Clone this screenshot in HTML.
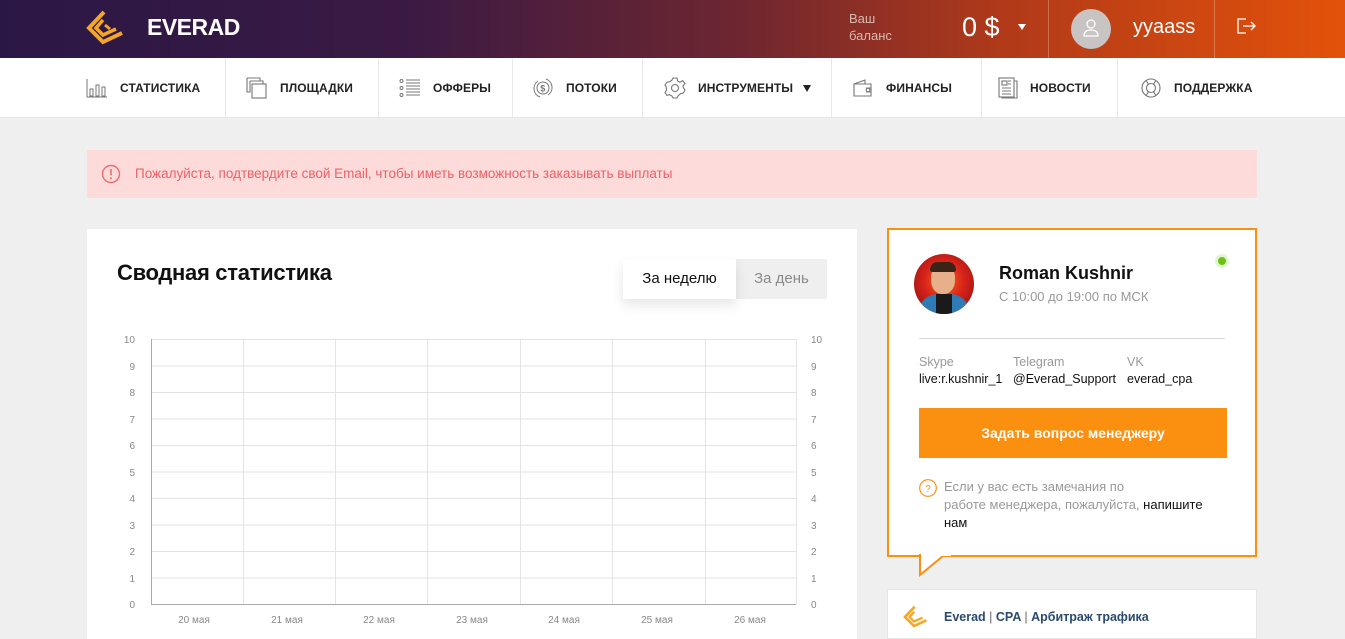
<!DOCTYPE html>
<html><head><meta charset="utf-8"><style>
*{box-sizing:border-box;margin:0;padding:0}
body{width:1345px;height:634px;overflow:hidden;background:#efefef;font-family:"Liberation Sans",sans-serif;position:relative}
.hdr{position:absolute;left:0;top:0;width:1345px;height:58px;background:linear-gradient(90deg,#2b1745 0%,#3a1a44 30%,#6e2630 55%,#b23a19 75%,#e3520a 100%)}
.nav{position:absolute;left:0;top:58px;width:1345px;height:60px;background:#fff;border-bottom:1px solid #e6e6e6}
.ni{position:absolute;top:0;height:60px;display:flex;align-items:center;font-size:12px;font-weight:bold;color:#222;letter-spacing:.1px}
.sep{position:absolute;top:0;width:1px;height:60px;background:#e8e8e8}
.ni svg{margin-right:12px}
.abs{position:absolute}
</style></head><body>
<div class="hdr">
 <svg class="abs" style="left:84px;top:8px" width="44" height="40" viewBox="0 0 44 40"><path d="M20 4 L5 20 L19 34 L38 25" fill="none" stroke="#f5a623" stroke-width="4"/><path d="M19 12 L12 20 L19 27 L32 21" fill="none" stroke="#f5a623" stroke-width="3.5"/><path d="M21 17 L26 21" stroke="#f5a623" stroke-width="3"/></svg>
 <div class="abs" style="left:147px;top:14px;color:#fff;font-size:23px;font-weight:bold;letter-spacing:-.5px">EVERAD</div>
 <div class="abs" style="left:849px;top:10px;color:#d9b9b0;font-size:13px;line-height:17px">Ваш<br>баланс</div>
 <div class="abs" style="left:962px;top:12px;color:#fff;font-size:27px">0 $</div>
 <div class="abs" style="left:1018px;top:24px;width:0;height:0;border-left:4px solid transparent;border-right:4px solid transparent;border-top:6px solid #fff"></div>
 <div class="abs" style="left:1048px;top:0;width:1px;height:58px;background:rgba(255,255,255,.25)"></div>
 <div class="abs" style="left:1071px;top:9px;width:40px;height:40px;border-radius:50%;background:#c8c4c4"></div>
 <svg class="abs" style="left:1082px;top:18px" width="18" height="20" viewBox="0 0 18 20"><circle cx="9" cy="6" r="4" fill="none" stroke="#fff" stroke-width="1.3"/><path d="M2 18 Q2 12 9 12 Q16 12 16 18 Z" fill="none" stroke="#fff" stroke-width="1.3"/></svg>
 <div class="abs" style="left:1133px;top:16px;color:#fff;font-size:20px">yyaass</div>
 <div class="abs" style="left:1214px;top:0;width:1px;height:58px;background:rgba(255,255,255,.25)"></div>
 <svg class="abs" style="left:1236px;top:17px" width="22" height="18" viewBox="0 0 22 18"><path d="M10 2 H2 V16 H10" fill="none" stroke="#fff" stroke-width="1.3"/><path d="M7 9 H19 M15 5 L19 9 L15 13" fill="none" stroke="#fff" stroke-width="1.3"/></svg>
</div>
<div class="nav">
 <div class="ni" style="left:86px"><svg width="22" height="20" viewBox="0 0 22 20" fill="none" stroke="#777" stroke-width="1"><path d="M1 1V19H21"/><rect x="4" y="11" width="3" height="7"/><rect x="10" y="7" width="3" height="11"/><rect x="16" y="9" width="3" height="9"/></svg>СТАТИСТИКА</div>
 <div class="sep" style="left:225px"></div>
 <div class="ni" style="left:246px"><svg width="22" height="22" viewBox="0 0 22 22" fill="none" stroke="#777" stroke-width="1.1"><path d="M1 1H14V4M4 4H17V7"/><rect x="6" y="7" width="14" height="14"/><path d="M1 1V15H4V4"/></svg>ПЛОЩАДКИ</div>
 <div class="sep" style="left:378px"></div>
 <div class="ni" style="left:399px"><svg width="22" height="18" viewBox="0 0 22 18" fill="none" stroke="#777" stroke-width="1"><circle cx="2.5" cy="2" r="1.5"/><circle cx="2.5" cy="9" r="1.5"/><circle cx="2.5" cy="16" r="1.5"/><path d="M7 1H21M7 4H21M7 7H21M7 10H21M7 13H21M7 16H21"/></svg>ОФФЕРЫ</div>
 <div class="sep" style="left:512px"></div>
 <div class="ni" style="left:532px"><svg width="22" height="22" viewBox="0 0 22 22" fill="none" stroke="#777" stroke-width="1"><path d="M6 4A9 9 0 0 0 8 20M16 18A9 9 0 0 0 14 2"/><circle cx="11" cy="11" r="6"/><text x="8.3" y="14.5" font-size="9" fill="#777" stroke="none" font-family="Liberation Sans">$</text></svg>ПОТОКИ</div>
 <div class="sep" style="left:642px"></div>
 <div class="ni" style="left:664px"><svg width="22" height="22" viewBox="0 0 22 22" fill="none" stroke="#777" stroke-width="1.1"><circle cx="11" cy="11" r="3.5"/><path d="M9 1H13L13.6 4 16 5.2 18.6 3.6 21 6.4 19 9 19.5 11 21 13 19.4 16 16.6 16.6 14 19 13 21H9L8 19 5.4 17.6 3 18.5 1 15.6 2.6 13 2.2 10 1 8 3 5.2 5.6 4.8 8 3Z"/></svg>ИНСТРУМЕНТЫ<span style="margin-left:10px;display:inline-block;border-left:4.5px solid transparent;border-right:4.5px solid transparent;border-top:7px solid #222"></span></div>
 <div class="sep" style="left:831px"></div>
 <div class="ni" style="left:852px"><svg width="22" height="20" viewBox="0 0 22 20" fill="none" stroke="#777" stroke-width="1.1"><path d="M2 6H19V18H2ZM2 6L13 2V6"/><circle cx="16" cy="12" r="1.8"/><path d="M14 10H19V14H14"/></svg>ФИНАНСЫ</div>
 <div class="sep" style="left:981px"></div>
 <div class="ni" style="left:998px"><svg width="20" height="22" viewBox="0 0 20 22" fill="none" stroke="#777" stroke-width="1.1"><rect x="1" y="1" width="15" height="19"/><path d="M16 4H19V21H4V20"/><rect x="4" y="4" width="5" height="4"/><path d="M10 4H13M10 7H13M4 11H13M4 14H13M4 17H13"/></svg>НОВОСТИ</div>
 <div class="sep" style="left:1117px"></div>
 <div class="ni" style="left:1140px"><svg width="22" height="22" viewBox="0 0 22 22" fill="none" stroke="#777" stroke-width="1.1"><circle cx="11" cy="11" r="9"/><circle cx="11" cy="11" r="4.5"/><path d="M6 3L8.5 7.5M16 3L13.5 7.5M6 19L8.5 14.5M16 19L13.5 14.5"/></svg>ПОДДЕРЖКА</div>
</div>
<div class="abs" style="left:87px;top:150px;width:1170px;height:48px;background:#fddbdb"></div>
<svg class="abs" style="left:101px;top:164px" width="20" height="20" viewBox="0 0 20 20"><circle cx="10" cy="10" r="8.5" fill="none" stroke="#ef6b6e" stroke-width="1.4"/><path d="M10 5V11.5" stroke="#ef6b6e" stroke-width="1.6"/><circle cx="10" cy="14.3" r="1" fill="#ef6b6e"/></svg>
<div class="abs" style="left:135px;top:166px;color:#ec6166;font-size:13.5px">Пожалуйста, подтвердите свой Email, чтобы иметь возможность заказывать выплаты</div>

<div class="abs" style="left:87px;top:229px;width:770px;height:410px;background:#fff"></div>
<div class="abs" style="left:117px;top:260px;font-size:22px;font-weight:bold;color:#111;letter-spacing:-.3px">Сводная статистика</div>
<div class="abs" style="left:736px;top:259px;width:91px;height:40px;background:#efefef;color:#8a8a8a;font-size:15px;line-height:40px;text-align:center">За день</div>
<div class="abs" style="left:623px;top:259px;width:113px;height:40px;background:#fff;box-shadow:0 6px 12px rgba(0,0,0,.1);color:#111;font-size:15px;line-height:40px;text-align:center">За неделю</div>
<svg class="abs" style="left:87px;top:330px" width="770" height="300">
<g stroke="#e3e3e3" stroke-width="1">
<line x1="64" y1="9.5" x2="709" y2="9.5"/><line x1="64" y1="36" x2="709" y2="36"/><line x1="64" y1="62.5" x2="709" y2="62.5"/><line x1="64" y1="89" x2="709" y2="89"/><line x1="64" y1="115.5" x2="709" y2="115.5"/><line x1="64" y1="142" x2="709" y2="142"/><line x1="64" y1="168.5" x2="709" y2="168.5"/><line x1="64" y1="195" x2="709" y2="195"/><line x1="64" y1="221.5" x2="709" y2="221.5"/><line x1="64" y1="248" x2="709" y2="248"/>
<line x1="156.5" y1="9" x2="156.5" y2="274"/><line x1="248.5" y1="9" x2="248.5" y2="274"/><line x1="340.5" y1="9" x2="340.5" y2="274"/><line x1="433.5" y1="9" x2="433.5" y2="274"/><line x1="525.5" y1="9" x2="525.5" y2="274"/><line x1="618.5" y1="9" x2="618.5" y2="274"/><line x1="709.5" y1="9" x2="709.5" y2="274"/>
</g>
<path d="M64.5 9V274.5H709" fill="none" stroke="#aaa"/>
<g font-size="10" fill="#888" font-family="Liberation Sans">
<g text-anchor="end"><text x="48" y="13">10</text><text x="48" y="40">9</text><text x="48" y="66">8</text><text x="48" y="93">7</text><text x="48" y="119">6</text><text x="48" y="146">5</text><text x="48" y="172">4</text><text x="48" y="199">3</text><text x="48" y="225">2</text><text x="48" y="252">1</text><text x="48" y="278">0</text></g>
<g><text x="724" y="13">10</text><text x="724" y="40">9</text><text x="724" y="66">8</text><text x="724" y="93">7</text><text x="724" y="119">6</text><text x="724" y="146">5</text><text x="724" y="172">4</text><text x="724" y="199">3</text><text x="724" y="225">2</text><text x="724" y="252">1</text><text x="724" y="278">0</text></g>
<g text-anchor="middle"><text x="107" y="293">20 мая</text><text x="200" y="293">21 мая</text><text x="292" y="293">22 мая</text><text x="385" y="293">23 мая</text><text x="477" y="293">24 мая</text><text x="570" y="293">25 мая</text><text x="663" y="293">26 мая</text></g>
</g></svg>

<div class="abs" style="left:887px;top:228px;width:370px;height:329px;background:#fff;border:2px solid #fb9010"></div>
<svg class="abs" style="left:918px;top:554px" width="40" height="24"><path d="M2 0V21L25 2" fill="#fff" stroke="#fb9010" stroke-width="2"/><rect x="3" y="0" width="30" height="2" fill="#fff"/></svg>
<div class="abs" style="left:914px;top:254px;width:60px;height:60px;border-radius:50%;background:radial-gradient(circle at 50% 45%,#f26a1a 0%,#d8231a 45%,#7e0d0d 100%);overflow:hidden">
 <div style="position:absolute;left:17px;top:10px;width:24px;height:30px;border-radius:45%;background:#e8b08a"></div>
 <div style="position:absolute;left:16px;top:8px;width:26px;height:10px;border-radius:10px 10px 3px 3px;background:#3a2418"></div>
 <div style="position:absolute;left:4px;top:40px;width:52px;height:30px;border-radius:20px 20px 0 0;background:#2f7bb5"></div>
 <div style="position:absolute;left:22px;top:40px;width:16px;height:20px;background:#1a1a1a"></div>
</div>
<div class="abs" style="left:1215px;top:254px;width:14px;height:14px;border-radius:50%;background:#e2f5cf"></div>
<div class="abs" style="left:1218px;top:257px;width:8px;height:8px;border-radius:50%;background:#6ac31a"></div>
<div class="abs" style="left:999px;top:263px;font-size:18px;font-weight:bold;color:#111">Roman Kushnir</div>
<div class="abs" style="left:999px;top:289px;font-size:13px;color:#999">С 10:00 до 19:00 по МСК</div>
<div class="abs" style="left:919px;top:338px;width:306px;height:1px;background:#d6d6d6"></div>
<div class="abs" style="left:919px;top:355px;font-size:12.5px;color:#999">Skype</div>
<div class="abs" style="left:1013px;top:355px;font-size:12.5px;color:#999">Telegram</div>
<div class="abs" style="left:1127px;top:355px;font-size:12.5px;color:#999">VK</div>
<div class="abs" style="left:919px;top:372px;font-size:12.5px;color:#111">live:r.kushnir_1</div>
<div class="abs" style="left:1013px;top:372px;font-size:12.5px;color:#111">@Everad_Support</div>
<div class="abs" style="left:1127px;top:372px;font-size:12.5px;color:#111">everad_cpa</div>
<div class="abs" style="left:919px;top:408px;width:308px;height:50px;background:#fb9010;color:#fff;font-size:14px;font-weight:bold;text-align:center;line-height:50px">Задать вопрос менеджеру</div>
<svg class="abs" style="left:918px;top:478px" width="20" height="20"><circle cx="10" cy="10" r="8.3" fill="none" stroke="#fb9010" stroke-width="1.2"/><text x="10" y="14" text-anchor="middle" font-size="10" fill="#fb9010" font-family="Liberation Sans">?</text></svg>
<div class="abs" style="left:944px;top:478px;width:278px;font-size:13px;line-height:18px;color:#999">Если у вас есть замечания по<br>работе менеджера, пожалуйста, <span style="color:#111">напишите нам</span></div>

<div class="abs" style="left:887px;top:589px;width:370px;height:50px;background:#fff;border:1px solid #e6e6e6"></div>
<svg class="abs" style="left:900px;top:604px" width="32" height="26" viewBox="0 0 44 40"><path d="M20 4 L5 20 L19 34 L38 25" fill="none" stroke="#f5a623" stroke-width="4"/><path d="M19 12 L12 20 L19 27 L32 21" fill="none" stroke="#f5a623" stroke-width="3.5"/></svg>
<div class="abs" style="left:944px;top:610px;font-size:12.5px;font-weight:bold;color:#2c4a6e">Everad <span style="font-weight:normal;color:#666">|</span> CPA <span style="font-weight:normal;color:#666">|</span> Арбитраж трафика</div>
</body></html>
